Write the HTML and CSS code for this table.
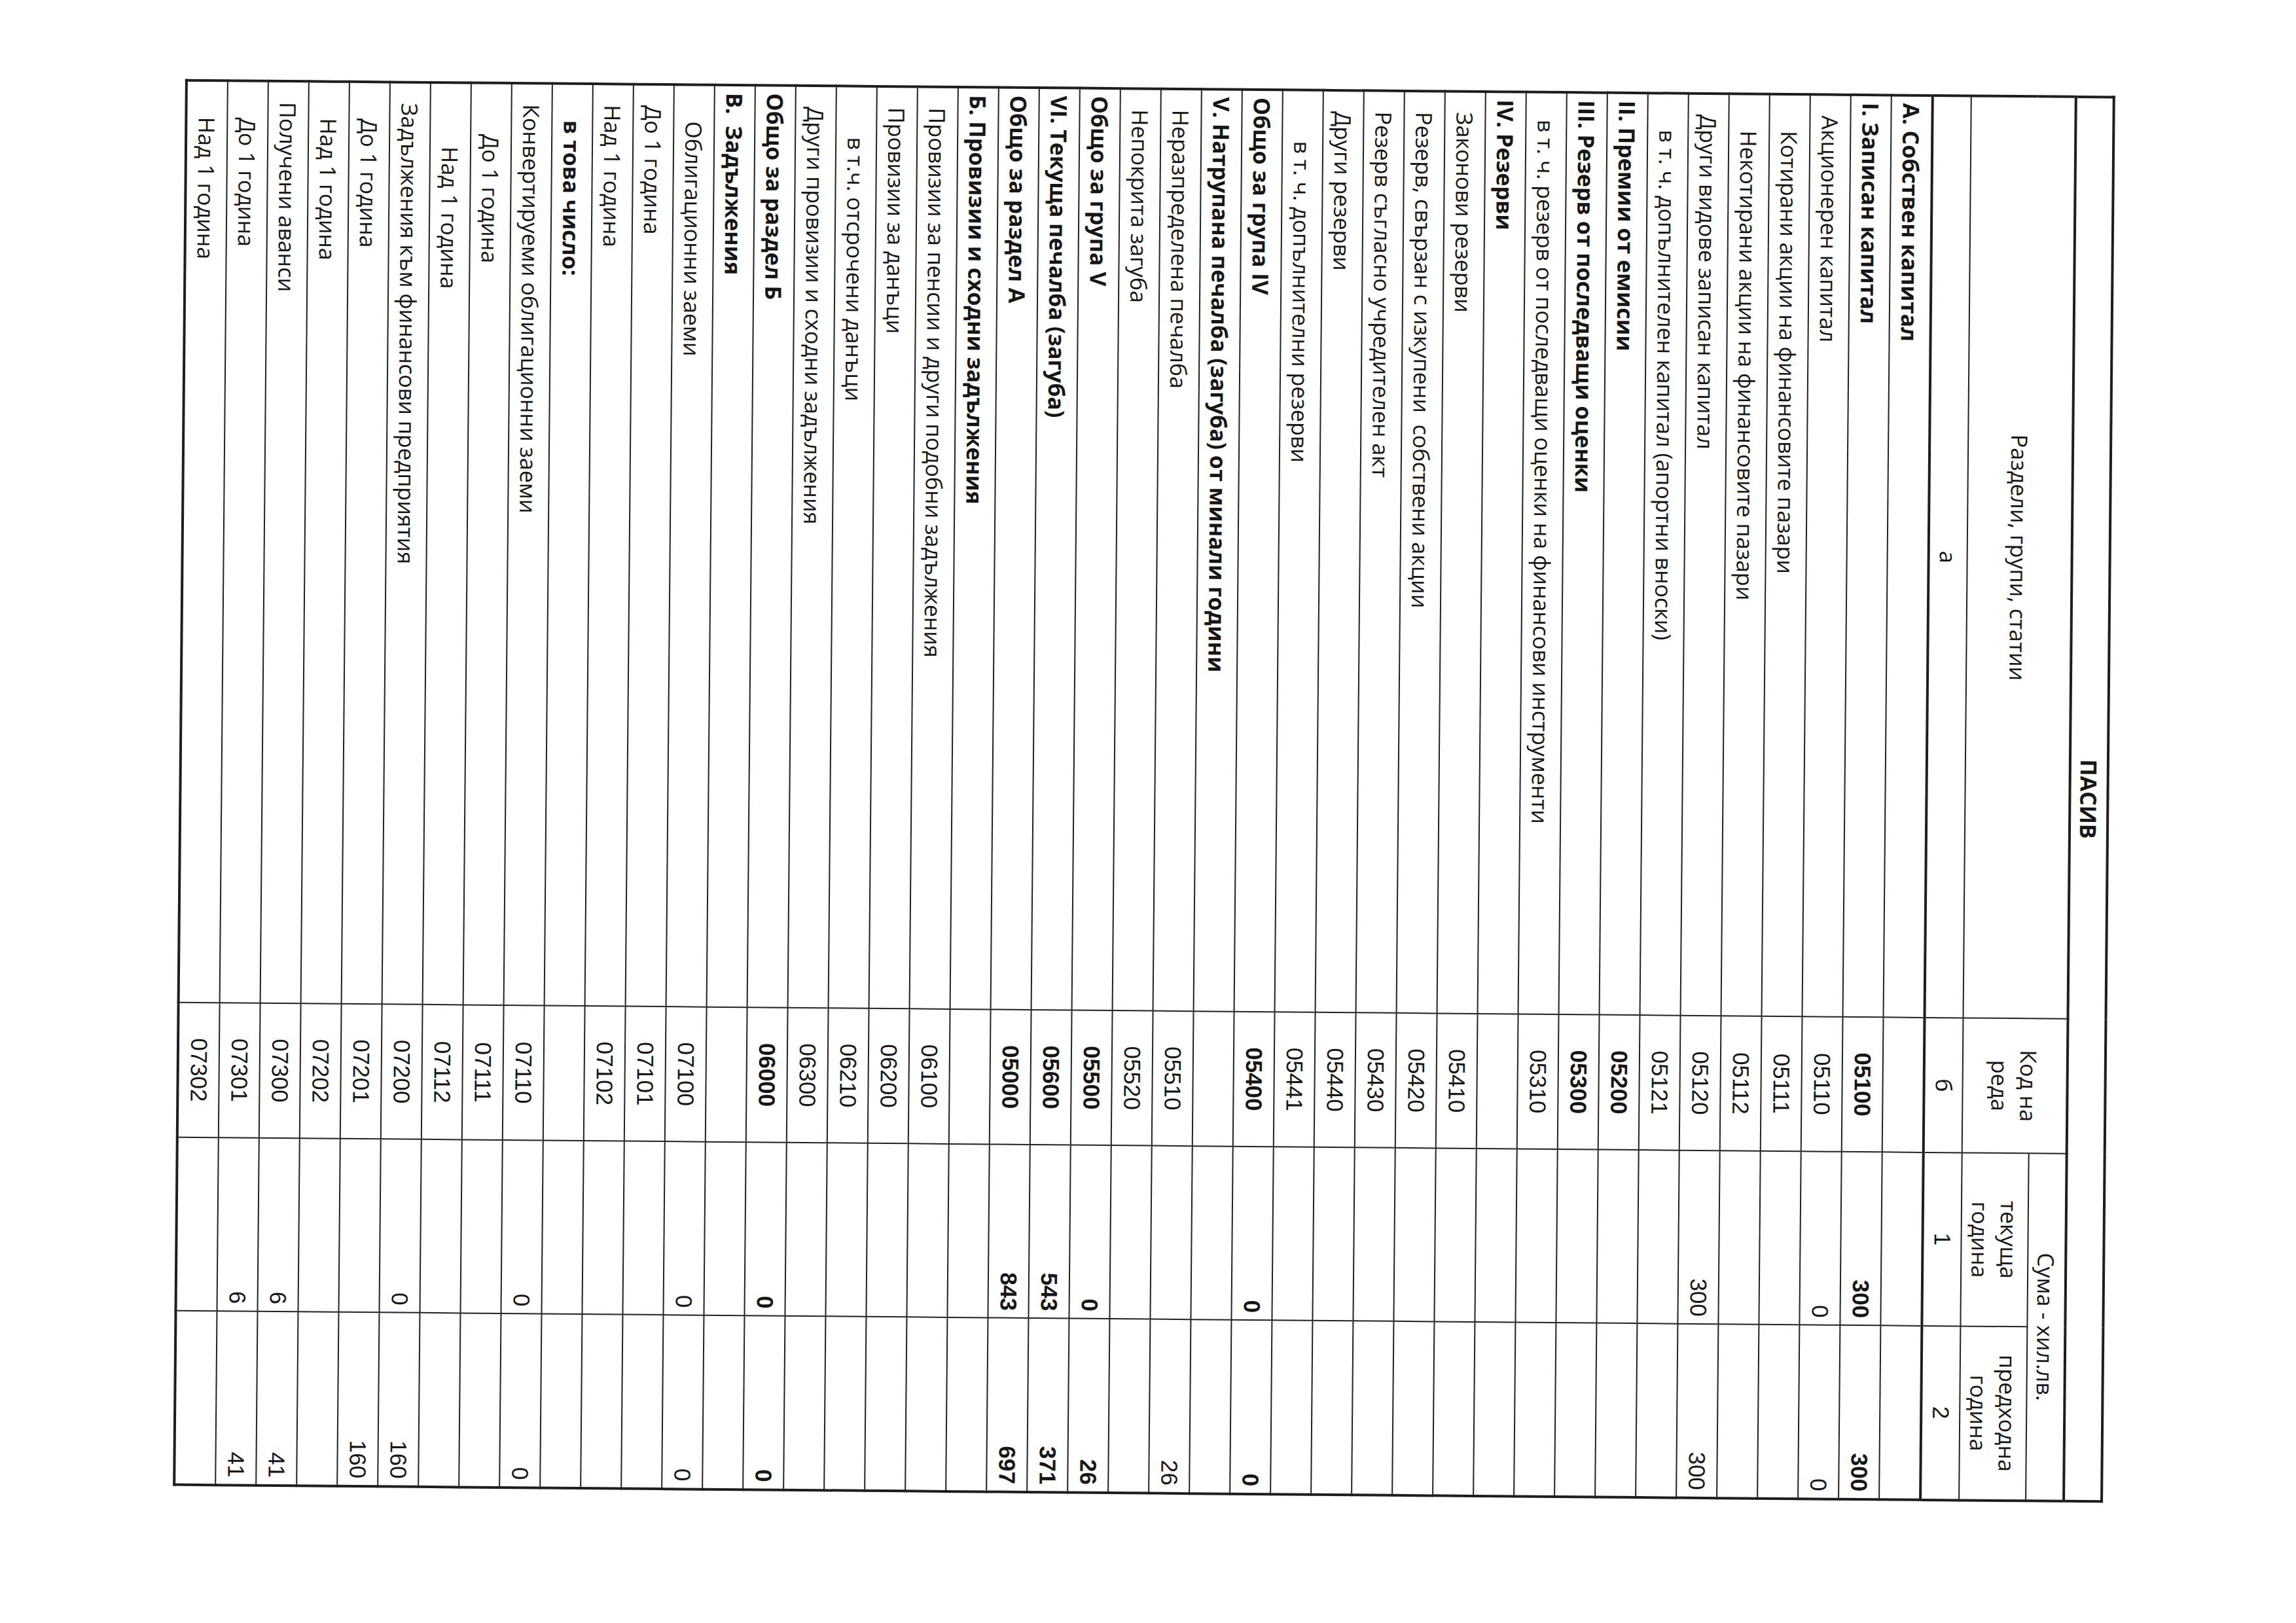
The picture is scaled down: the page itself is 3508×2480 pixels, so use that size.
FILE: index.html
```html
<!DOCTYPE html>
<html lang="bg">
<head>
<meta charset="utf-8">
<title>ПАСИВ</title>
<link rel="stylesheet" href="styles.css">
</head>
<body>
<div class="page">
  <div class="sheet">
    <table class="balance">
      <colgroup>
        <col class="c-name">
        <col class="c-code">
        <col class="c-cur">
        <col class="c-prev">
      </colgroup>
      <thead>
        <tr class="r-title"><th colspan="4">ПАСИВ</th></tr>
        <tr class="r-head1">
          <th rowspan="2" class="h-name">Раздели, групи, статии</th>
          <th rowspan="2" class="h-code">Код на<br>реда</th>
          <th colspan="2" class="h-sum">Сума - хил.лв.</th>
        </tr>
        <tr class="r-head2">
          <th class="h-year">текуща<br>година</th>
          <th class="h-year">предходна<br>година</th>
        </tr>
        <tr class="r-label">
          <td class="lbl-a">а</td>
          <td class="num-c">б</td>
          <td class="num-c">1</td>
          <td class="num-c">2</td>
        </tr>
      </thead>
      <tbody>
        <tr class="b"><td class="n l0">А. Собствен капитал</td><td class="code"></td><td class="amt"></td><td class="amt"></td></tr>
        <tr class="b"><td class="n l0">I. Записан капитал</td><td class="code">05100</td><td class="amt">300</td><td class="amt">300</td></tr>
        <tr><td class="n l1">Акционерен капитал</td><td class="code">05110</td><td class="amt">0</td><td class="amt">0</td></tr>
        <tr><td class="n l2">Котирани акции на финансовите пазари</td><td class="code">05111</td><td class="amt"></td><td class="amt"></td></tr>
        <tr><td class="n l2">Некотирани акции на финансовите пазари</td><td class="code">05112</td><td class="amt"></td><td class="amt"></td></tr>
        <tr><td class="n l1">Други видове записан капитал</td><td class="code">05120</td><td class="amt">300</td><td class="amt">300</td></tr>
        <tr><td class="n l2">в т. ч. допълнителен капитал (апортни вноски)</td><td class="code">05121</td><td class="amt"></td><td class="amt"></td></tr>
        <tr class="b"><td class="n l0">II. Премии от емисии</td><td class="code">05200</td><td class="amt"></td><td class="amt"></td></tr>
        <tr class="b"><td class="n l0">III. Резерв от последващи оценки</td><td class="code">05300</td><td class="amt"></td><td class="amt"></td></tr>
        <tr><td class="n l1b">в т. ч. резерв от последващи оценки на финансови инструменти</td><td class="code">05310</td><td class="amt"></td><td class="amt"></td></tr>
        <tr class="b"><td class="n l0">IV. Резерви</td><td class="code"></td><td class="amt"></td><td class="amt"></td></tr>
        <tr><td class="n l1">Законови резерви</td><td class="code">05410</td><td class="amt"></td><td class="amt"></td></tr>
        <tr><td class="n l1">Резерв, свързан с изкупени&nbsp; собствени акции</td><td class="code">05420</td><td class="amt"></td><td class="amt"></td></tr>
        <tr><td class="n l1">Резерв съгласно учредителен акт</td><td class="code">05430</td><td class="amt"></td><td class="amt"></td></tr>
        <tr><td class="n l1">Други резерви</td><td class="code">05440</td><td class="amt"></td><td class="amt"></td></tr>
        <tr><td class="n l3">в т. ч. допълнителни резерви</td><td class="code">05441</td><td class="amt"></td><td class="amt"></td></tr>
        <tr class="b"><td class="n l0">Общо за група IV</td><td class="code">05400</td><td class="amt">0</td><td class="amt">0</td></tr>
        <tr class="b"><td class="n l0">V. Натрупана печалба (загуба) от минали години</td><td class="code"></td><td class="amt"></td><td class="amt"></td></tr>
        <tr><td class="n l1">Неразпределена печалба</td><td class="code">05510</td><td class="amt"></td><td class="amt">26</td></tr>
        <tr><td class="n l1">Непокрита загуба</td><td class="code">05520</td><td class="amt"></td><td class="amt"></td></tr>
        <tr class="b"><td class="n l0">Общо за група V</td><td class="code">05500</td><td class="amt">0</td><td class="amt">26</td></tr>
        <tr class="b"><td class="n l0">VI. Текуща печалба (загуба)</td><td class="code">05600</td><td class="amt">543</td><td class="amt">371</td></tr>
        <tr class="b"><td class="n l0">Общо за раздел А</td><td class="code">05000</td><td class="amt">843</td><td class="amt">697</td></tr>
        <tr class="b"><td class="n l0">Б. Провизии и сходни задължения</td><td class="code"></td><td class="amt"></td><td class="amt"></td></tr>
        <tr><td class="n l1">Провизии за пенсии и други подобни задължения</td><td class="code">06100</td><td class="amt"></td><td class="amt"></td></tr>
        <tr><td class="n l1">Провизии за данъци</td><td class="code">06200</td><td class="amt"></td><td class="amt"></td></tr>
        <tr><td class="n l3">в т.ч. отсрочени данъци</td><td class="code">06210</td><td class="amt"></td><td class="amt"></td></tr>
        <tr><td class="n l1">Други провизии и сходни задължения</td><td class="code">06300</td><td class="amt"></td><td class="amt"></td></tr>
        <tr class="b"><td class="n l0">Общо за раздел Б</td><td class="code">06000</td><td class="amt">0</td><td class="amt">0</td></tr>
        <tr class="b"><td class="n l0">В.&nbsp; Задължения</td><td class="code"></td><td class="amt"></td><td class="amt"></td></tr>
        <tr><td class="n l2">Облигационни заеми</td><td class="code">07100</td><td class="amt">0</td><td class="amt">0</td></tr>
        <tr><td class="n l1">До 1 година</td><td class="code">07101</td><td class="amt"></td><td class="amt"></td></tr>
        <tr><td class="n l1">Над 1 година</td><td class="code">07102</td><td class="amt"></td><td class="amt"></td></tr>
        <tr><td class="n l2 strong">в това число:</td><td class="code"></td><td class="amt"></td><td class="amt"></td></tr>
        <tr><td class="n l1">Конвертируеми облигационни заеми</td><td class="code">07110</td><td class="amt">0</td><td class="amt">0</td></tr>
        <tr><td class="n l3">До 1 година</td><td class="code">07111</td><td class="amt"></td><td class="amt"></td></tr>
        <tr><td class="n l4">Над 1 година</td><td class="code">07112</td><td class="amt"></td><td class="amt"></td></tr>
        <tr><td class="n l1">Задължения към финансови предприятия</td><td class="code">07200</td><td class="amt">0</td><td class="amt">160</td></tr>
        <tr><td class="n l2">До 1 година</td><td class="code">07201</td><td class="amt"></td><td class="amt">160</td></tr>
        <tr><td class="n l2">Над 1 година</td><td class="code">07202</td><td class="amt"></td><td class="amt"></td></tr>
        <tr><td class="n l1">Получени аванси</td><td class="code">07300</td><td class="amt">6</td><td class="amt">41</td></tr>
        <tr><td class="n l2">До 1 година</td><td class="code">07301</td><td class="amt">6</td><td class="amt">41</td></tr>
        <tr><td class="n l2">Над 1 година</td><td class="code">07302</td><td class="amt"></td><td class="amt"></td></tr>
      </tbody>
    </table>
  </div>
</div>
</body>
</html>
```

FILE: styles.css
```css
html, body {
  margin: 0;
  padding: 0;
  background: #ffffff;
}

.page {
  width: 3508px;
  height: 2480px;
  overflow: hidden;
  display: flex;
  align-items: center;
  justify-content: center;
  background: #ffffff;
}

.sheet {
  flex: 0 0 auto;
  width: 2146px;
  height: 2947px;
  transform: translate(-5px, -34px) rotate(90.5deg);
}

.balance {
  width: 2146px;
  table-layout: fixed;
  border-collapse: collapse;
  border: 4px solid #1e1e1e;
  color: #161616;
  font-family: "Open Sans", "Noto Sans", sans-serif;
  font-size: 34px;
}

.c-name { width: 1409px; }
.c-code { width: 206px; }
.c-cur { width: 265px; }
.c-prev { width: 266px; }

.balance th,
.balance td {
  border: 2px solid #222222;
  padding: 0;
  vertical-align: middle;
  overflow: hidden;
  white-space: nowrap;
}

.balance th {
  font-weight: 400;
  text-align: center;
  line-height: 44px;
}

.balance .r-title th {
  height: 54px;
  font-weight: 700;
  border-bottom: 4px solid #1e1e1e;
}

.balance .r-head1 th { height: 55px; }
.balance .r-head2 th { height: 100px; }

.balance .r-label td {
  height: 56px;
  text-align: center;
  border-bottom: 4px solid #1e1e1e;
}

.balance .num-c {
  font-family: "Liberation Sans", Arial, sans-serif;
  font-size: 35px;
}

.balance tbody td {
  height: 60px;
}

.balance td.n {
  text-align: left;
  padding-right: 6px;
}

.balance td.l0 { padding-left: 10px; }
.balance td.l1 { padding-left: 30px; }
.balance td.l1b { padding-left: 40px; }
.balance td.l2 { padding-left: 54px; }
.balance td.l3 { padding-left: 76px; }
.balance td.l4 { padding-left: 96px; }

.balance .b td { font-weight: 700; }
.balance td.strong { font-weight: 700; }

.balance td.code {
  text-align: center;
  font-family: "Liberation Sans", Arial, sans-serif;
  font-size: 35px;
}

.balance td.amt {
  text-align: right;
  padding-right: 10px;
  font-family: "Liberation Sans", Arial, sans-serif;
  font-size: 35px;
}
```
